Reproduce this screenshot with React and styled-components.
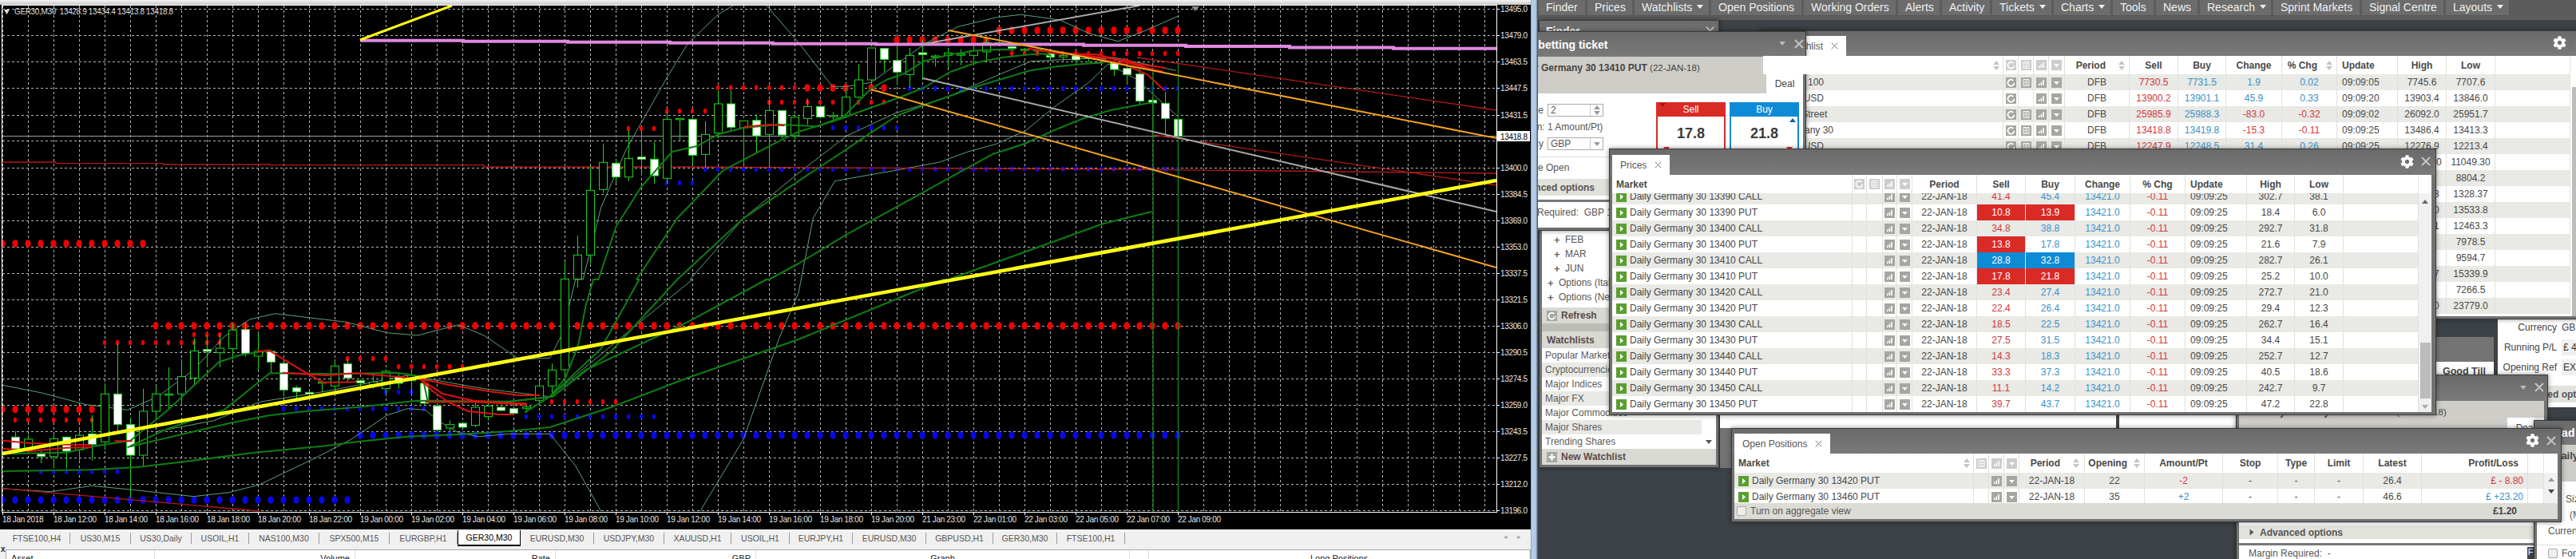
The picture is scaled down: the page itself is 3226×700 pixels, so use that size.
import React from 'react';
import styled, { createGlobalStyle } from 'styled-components';
import { FaCog } from 'react-icons/fa';

const Global = createGlobalStyle`
  html, body { margin: 0; padding: 0; background: #3c4246; }
  #root { width: 3226px; height: 700px; overflow: hidden; }
  * { box-sizing: border-box; }
`;

/* ---------- chart data, written in px of the plot ---------- */
const z1 = (x, y) => [x / 1.568, y / 3];
const z2 = (x, y) => [x / 1.568, 350 + y / 3];
const z3 = (x, y) => [1000 + x / 1.65, y / 3];
const z4 = (x, y) => [1000 + x / 1.65, 350 + y / 3];
const z10 = (x, y) => [1090 + x / 3, 30 + y / 3];
const pts = (fn, list) => list.map(([x, y]) => fn(x, y));
const str = (list) => list.map(([x, y]) => `${x.toFixed(1)},${y.toFixed(1)}`).join(' ');

const snap = (x) => 1475 - 16 * Math.round((1475 - x) / 16);

const candleSets = [
  [z2, [[30,570,592,636,650,1],[55,585,600,640,655,0],[80,640,655,665,690,1],[105,580,598,665,710,0],[130,590,592,645,710,1],[155,560,585,640,680,0],[180,510,580,620,680,1],[205,390,430,610,640,0],[231,240,430,545,570,1],[256,520,545,660,820,1],[281,410,495,660,700,0],[306,400,430,495,530,0],[331,330,430,434,490,0],[356,300,365,430,470,0],[381,220,268,370,400,0],[406,210,263,270,330,1],[431,205,258,275,330,0],[457,165,190,260,300,0],[482,165,188,278,290,1],[507,200,270,288,340,0],[532,265,270,310,350,1],[557,310,315,415,440,1],[582,400,407,422,450,1],[607,420,424,430,440,1],[632,380,385,388,420,0],[657,300,325,400,420,0],[682,300,317,370,385,1],[707,375,380,388,400,1],[732,360,385,395,410,0],[757,340,345,410,430,0],[782,350,365,390,410,1],[807,345,360,380,430,0],[832,375,390,465,470,1],[858,470,475,565,570,1],[883,530,545,558,575,0],[908,535,540,555,560,1],[933,460,480,548,555,0],[958,450,475,515,530,0],[983,470,480,492,495,1],[1008,475,485,503,510,1],[1033,470,478,484,500,0],[1058,385,400,455,470,0],[1083,315,340,400,440,0]]],
  [z1, [[1109,985,1048,1389,1440,0],[1134,885,958,1048,1080,0],[1159,625,715,958,990,0],[1184,540,610,712,725,0],[1209,600,613,665,690,1],[1234,490,595,665,680,0],[1259,490,590,598,660,1],[1284,535,598,660,690,1],[1309,420,448,670,690,0],[1334,445,445,449,530,0],[1359,448,448,583,620,1],[1384,455,505,580,630,0],[1410,340,390,500,520,0],[1435,340,390,478,490,1],[1460,455,454,480,620,0],[1485,430,452,510,575,1],[1511,375,415,505,630,0],[1536,415,415,507,520,1],[1560,430,440,510,530,0]]],
  [z3, [[18,370,400,445,470,0],[45,395,400,440,445,1],[71,420,434,438,460,0],[98,330,365,435,440,0],[124,240,300,365,370,0],[150,180,180,300,320,0]]],
  [z10, [[52,92,92,133,180,1],[100,85,137,181,225,1],[148,90,118,190,240,0],[196,60,108,115,205,1],[244,115,120,124,160,0],[292,90,109,118,165,0],[340,95,113,117,155,0],[388,80,100,118,155,0],[436,50,70,105,140,0],[484,20,70,72,75,0],[532,70,85,92,100,1],[580,90,95,97,105,0],[628,90,97,100,110,0],[676,105,113,125,135,1],[724,110,118,124,140,0],[772,110,120,135,140,1],[820,120,125,130,145,0],[868,125,130,135,145,0],[916,130,147,171,195,1],[964,150,167,190,225,1],[1012,165,188,290,300,1],[1060,280,286,297,420,1],[1108,255,298,355,415,1],[1156,340,358,422,430,1]]],
];

const candles = candleSets.flatMap(([fn, list]) =>
  list.map(([x, wt, bt, bb, wb, white]) => ({
    x: snap(fn(x, 0)[0]),
    wt: fn(0, wt)[1],
    bt: fn(0, bt)[1],
    bb: fn(0, bb)[1],
    wb: fn(0, wb)[1],
    white: !!white,
  }))
);

const dotRows = [
  [3, 178, 305, 'r', 1], [194, 1475, 408, 'r', 1], [450, 1475, 545, 'b', 1], [3, 434, 626, 'b', 1],
  [899, 1000, 109.7, 'r', 0], [1011, 1107, 110, 'r', 1], [963, 1000, 128, 'r', 0], [1011, 1107, 128, 'r', 0],
  [835, 899, 139, 'r', 0], [787, 819, 161, 'r', 0], [1251, 1475, 38, 'r', 1], [1123, 1236, 50, 'r', 1], [1267, 1475, 67, 'r', 0],
  [131, 275, 429, 'r', 0], [242, 275, 419, 'r', 0], [435, 483, 449, 'r', 0], [499, 579, 459, 'r', 0],
  [3, 115, 512.7, 'r', 1], [19, 115, 526, 'r', 0], [691, 772, 503, 'r', 0],
  [355, 530, 511.7, 'b', 0], [483, 531, 491, 'b', 0], [659, 819, 521.7, 'b', 0], [51, 147, 590.7, 'b', 0],
  [835, 867, 229, 'b', 0], [883, 1000, 212, 'b', 0], [1011, 1475, 211.7, 'b', 0], [1139, 1475, 111, 'b', 0], [1043, 1123, 160, 'b', 0],
];

const dots = dotRows.flatMap(([a, b, y, c, big]) => {
  const out = [];
  for (let x = 1475; x >= a - 2; x -= 16) if (x <= b + 2) out.push({ x, y, c, big });
  return out;
});

const thin = [
  [...pts(z2, [[5,397],[80,425],[170,470],[250,490],[310,440],[380,340],[440,215],[490,150],[540,128],[680,160],[760,200],[820,210],[900,170],[950,210],[1020,300],[1080,295],[1105,200],[1130,0]]), ...pts(z1, [[1145,1050],[1180,780],[1230,560],[1310,290],[1350,165],[1410,55],[1440,20]])],
  [...pts(z1, [[1505,20],[1568,160]]), ...pts(z3, [[70,325],[100,325],[150,310],[265,160],[330,100],[410,65],[460,55],[540,75],[600,125],[660,155],[710,120],[785,60]])],
  [...pts(z2, [[0,785],[100,797],[180,775],[260,790],[380,815],[450,800],[510,770],[620,670],[690,600],[760,510],[800,485],[835,490],[860,530],[900,575],[940,590],[1000,580],[1080,580],[1130,700],[1180,870]])],
  [...pts(z2, [[1375,870],[1460,600],[1530,220],[1568,50]]), ...pts(z3, [[30,820],[75,680],[200,640],[290,610],[350,570],[410,540],[470,490],[530,400],[600,310],[640,240],[700,300],[785,440]])],
  [...pts(z2, [[310,570],[420,530],[510,460],[640,420],[800,360],[950,410],[1080,440],[1250,170],[1360,0]]), ...pts(z1, [[1355,1050],[1460,820],[1568,650]]), ...pts(z3, [[100,510],[200,425],[300,370],[415,280],[480,230],[650,215],[780,265]])],
];

const greens = [
  pts(z2, [[5,655],[130,650],[190,625],[256,605],[330,490],[380,400],[430,310],[470,285],[530,265]]),
  [...pts(z2, [[1030,500],[1080,440],[1110,370],[1135,250],[1150,100],[1165,0]]), ...pts(z1, [[1175,1050],[1210,850],[1260,700],[1320,570],[1370,548],[1410,505],[1460,480],[1530,468]]), ...pts(z3, [[40,475],[95,435]]), ...pts(z10, [[0,245],[60,210],[130,185],[200,140],[300,115],[400,100],[500,95],[540,98]])],
  [...pts(z2, [[256,625],[330,560],[440,490],[530,352],[650,355],[780,350],[830,365],[840,460],[1000,460],[1080,440],[1180,260],[1255,0]]), ...pts(z1, [[1250,1050],[1330,820],[1420,640],[1530,530],[1568,495]]), ...pts(z3, [[90,445]]), ...pts(z10, [[0,315],[100,280],[200,240],[300,180],[400,145],[500,125],[600,115],[650,112],[680,120]])],
  [...pts(z2, [[250,630],[450,540],[530,510],[600,495],[700,480],[820,455],[1000,458],[1085,440],[1200,270],[1330,0]]), ...pts(z1, [[1330,1050],[1460,820],[1568,680]]), ...pts(z3, [[100,560]]), ...pts(z10, [[0,410],[100,345],[200,305],[300,270],[400,235],[500,205],[600,175],[700,160],[800,150],[880,145]])],
  [...pts(z2, [[1085,440],[1150,340],[1350,160],[1505,0]]), ...pts(z1, [[1510,1050]]), ...pts(z3, [[0,990],[100,880],[300,680],[400,580]]), ...pts(z10, [[580,450],[700,395],[800,355],[900,325],[1000,305],[1060,295]])],
  [...pts(z2, [[0,720],[180,715],[270,705],[360,685],[500,650],[640,625],[700,610],[800,590],[900,582],[1000,570],[1080,555],[1200,480],[1350,370],[1568,225]]), ...pts(z4, [[300,0]]), ...pts(z3, [[310,1050],[630,840],[730,795]])],
];

const reds = [
  pts(z2, [[5,605],[60,615],[130,620],[180,622]]),
  pts(z2, [[5,635],[60,645],[130,632],[180,630]]),
  pts(z2, [[225,607],[260,607]]),
  pts(z2, [[230,575],[256,570]]),
  pts(z2, [[505,270],[530,268],[600,350],[635,387],[700,385]]),
  pts(z2, [[555,350],[640,360],[700,352],[780,365],[830,375],[880,395],[960,420],[1020,435],[1060,435]]),
  pts(z2, [[825,375],[850,420],[880,460],[920,495],[980,507],[1010,507]]),
  pts(z2, [[835,460],[930,460],[1035,470]]),
  pts(z2, [[830,380],[870,430],[930,455],[1000,465],[1033,465]]),
  pts(z1, [[1460,477],[1510,468],[1540,472]]),
  pts(z10, [[590,92],[700,110],[850,115],[1000,150],[1110,165]]),
  pts(z10, [[700,105],[900,130],[1100,180]]),
  pts(z10, [[800,120],[950,150],[1040,190],[1105,250]]),
  pts(z10, [[950,130],[1050,170]]),
];

const darkReds = [
  [[3,203],[70,203],[70,204.7],[204,204.7],[204,206],[338,206],[338,206.7],[606,206.7],[606,209],[872,209],[1406,212],[1874,217]],
  [[1424,72],[1874,138]],
  [[1445,169],[1874,232]],
  [[3,611.7],[325,640]],
];

const pinkSteps = [[451,50.7],[580,51.7],[711,52.7],[839,53.7],[968,54.7],[1097,55.5],[1357,56.7],[1485,58],[1615,59.5],[1745,60.7],[1874,60.7]];
const pinkPath = pinkSteps.slice(0, -1).flatMap(([x, y], i) => [[x, y], [pinkSteps[i + 1][0], y]]);

const priceAxis = [
  ['13495.0',10.7],['13479.0',43.5],['13463.5',76.7],['13447.5',109.5],['13431.5',143.5],['13416.0',176],['13400.0',209.5],['13384.5',242.5],['13369.0',275.5],['13353.0',309],['13337.5',342],['13321.5',374.5],['13306.0',407.5],['13290.5',440.5],['13274.5',473.5],['13259.0',506.5],['13243.5',539.5],['13227.5',572.5],['13212.0',605.5],['13196.0',638.5],
];
const timeAxis = ['18 Jan 2018','18 Jan 12:00','18 Jan 14:00','18 Jan 16:00','18 Jan 18:00','18 Jan 20:00','18 Jan 22:00','19 Jan 00:00','19 Jan 02:00','19 Jan 04:00','19 Jan 06:00','19 Jan 08:00','19 Jan 10:00','19 Jan 12:00','19 Jan 14:00','19 Jan 16:00','19 Jan 18:00','19 Jan 20:00','21 Jan 23:00','22 Jan 01:00','22 Jan 03:00','22 Jan 05:00','22 Jan 07:00','22 Jan 09:00'];

const Chart = () => {
  const vLines = [];
  for (let x = 3; x <= 1874; x += 32) vLines.push(x);
  return (
    <ChartSvg width="1917" height="657" viewBox="0 6 1917 657">
      <defs>
        <clipPath id="plot"><rect x="3" y="7" width="1871" height="634" /></clipPath>
      </defs>
      {vLines.map((x) => <line key={x} x1={x + 0.5} x2={x + 0.5} y1="7" y2="641" stroke="#b4b4b4" strokeDasharray="3 3" />)}
      {priceAxis.map(([t, y]) => <line key={t} x1="3" x2="1874" y1={Math.round(y) + 0.5} y2={Math.round(y) + 0.5} stroke="#b4b4b4" strokeDasharray="3 3" />)}
      <g clipPath="url(#plot)">
        <line x1="3" x2="1874" y1="170.5" y2="170.5" stroke="#9a9a9a" />
        {dots.map((d, i) => (
          <ellipse key={i} cx={d.x} cy={d.y} rx={d.big ? 3.6 : 2.2} ry={d.big ? 4.8 : 3.2} fill={d.c === 'r' ? '#f00000' : '#0808e6'} />
        ))}
        {thin.map((l, i) => <polyline key={i} points={str(l)} fill="none" stroke="#5f9f78" strokeWidth="1" />)}
        {darkReds.map((l, i) => <polyline key={i} points={str(l)} fill="none" stroke="#b01a1a" strokeWidth="1.3" />)}
        {candles.map((c, i) => (
          <g key={i}>
            <line x1={c.x + 0.5} x2={c.x + 0.5} y1={c.wt} y2={c.wb} stroke="#20d420" />
            <rect x={c.x - 4.5} y={c.bt} width="10" height={Math.max(c.bb - c.bt, 1.5)} fill={c.white ? '#fff' : '#000'} stroke="#20d420" />
          </g>
        ))}
        {greens.map((l, i) => <polyline key={i} points={str(l)} fill="none" stroke="#0e7d14" strokeWidth="2" strokeLinejoin="round" />)}
        {reds.map((l, i) => <polyline key={i} points={str(l)} fill="none" stroke="#dc1010" strokeWidth="2" strokeLinejoin="round" />)}
        <line x1="1444" x2="1444" y1="88" y2="641" stroke="#0e7d14" strokeWidth="1.5" />
        <line x1="1475.5" x2="1475.5" y1="80" y2="641" stroke="#0e7d14" strokeWidth="1.5" />
        <polyline points={str(pinkPath)} fill="none" stroke="#e088e0" strokeWidth="4" />
        <line x1="1157" y1="55" x2="1427" y2="7" stroke="#a8a8a8" strokeWidth="2" />
        <line x1="1156" y1="98" x2="1874" y2="265" stroke="#a8a8a8" strokeWidth="2" />
        <line x1="1188" y1="38" x2="1874" y2="173" stroke="#f0a020" strokeWidth="2" />
        <line x1="1091" y1="112" x2="1874" y2="335" stroke="#f0a020" strokeWidth="2" />
        <line x1="451" y1="50" x2="566" y2="7" stroke="#ffff14" strokeWidth="3" />
        <line x1="3" y1="568" x2="1874" y2="226" stroke="#ffff14" strokeWidth="4.5" />
      </g>
      <rect x="2.5" y="6.5" width="1872" height="635" fill="none" stroke="#fff" />
      <path d="M1492 8 l10 0 l-5 6 z" fill="#888" />
      <path d="M5 12 l7 0 l-3.5 6 z" fill="#ddd" />
      <ChartText x="18" y="18" fill="#d8d8d8">GER30,M30  13428.9 13434.4 13413.8 13418.8</ChartText>
      {priceAxis.map(([t, y]) => (
        <g key={t}>
          <line x1="1875" x2="1878" y1={Math.round(y) + 0.5} y2={Math.round(y) + 0.5} stroke="#fff" />
          {t !== '13416.0' && <ChartText x="1879" y={y + 4} fill="#e6e6e6">{t}</ChartText>}
        </g>
      ))}
      <rect x="1875" y="164" width="41" height="13" fill="#fff" />
      <ChartText x="1879" y="174.5" fill="#000">13418.8</ChartText>
      {timeAxis.map((t, k) => (
        <g key={t}>
          <line x1={3.5 + 64 * k} x2={3.5 + 64 * k} y1="641" y2="645" stroke="#fff" />
          <ChartText x={3 + 64 * k} y="654" fill="#e6e6e6">{t}</ChartText>
        </g>
      ))}
    </ChartSvg>
  );
};

/* ---------- left: terminal ---------- */
const Page = styled.div`
  display: flex;
  width: 3226px;
  height: 700px;
  overflow: hidden;
  font-family: "Liberation Sans", Arial, sans-serif;
`;
const Terminal = styled.div`
  width: 1917px;
  height: 700px;
  flex: none;
  display: flex;
  flex-direction: column;
  background: #f0f0f0;
  overflow: hidden;
`;
const TopEdge = styled.div`
  height: 6px;
  flex: none;
  background: linear-gradient(#f4f4f4, #c8c8c8);
`;
const ChartSvg = styled.svg`
  display: block;
  flex: none;
  background: #000;
`;
const ChartText = styled.text`
  font: 10px "Liberation Sans", Arial, sans-serif;
  letter-spacing: -0.35px;
  white-space: pre;
`;
const TabBar = styled.div`
  height: 25px;
  flex: none;
  display: flex;
  align-items: flex-start;
  padding: 3px 0 0 5px;
  background: #f0f0f0;
  border-top: 1px solid #fff;
`;
const ChartTab = styled.div`
  width: ${(p) => p.$w}px;
  height: ${(p) => (p.$active ? 20 : 14)}px;
  margin-top: ${(p) => (p.$active ? -3 : 0)}px;
  flex: none;
  display: flex;
  align-items: center;
  justify-content: center;
  font-size: 10.5px;
  color: ${(p) => (p.$active ? '#000' : '#555')};
  background: ${(p) => (p.$active ? '#fff' : 'transparent')};
  border-right: 1px solid ${(p) => (p.$active ? '#000' : '#9a9a9a')};
  border-left: ${(p) => (p.$active ? '1px solid #000' : '0')};
  border-bottom: ${(p) => (p.$active ? '2px solid #000' : '0')};
`;
const TabArrows = styled.div`
  margin-left: auto;
  width: 34px;
  display: flex;
  justify-content: space-between;
  padding-right: 12px;
  font-size: 9px;
  color: #aaa;
`;
const TerminalFoot = styled.div`
  flex: none;
  display: flex;
`;
const CloseMark = styled.span`
  width: 7px;
  margin-top: -6px;
  font-size: 10px;
  font-weight: bold;
  padding-left: 1px;
  color: #222;
  flex: none;
`;
const TerminalTable = styled.div`
  flex: 1;
  height: 30px;
  border: 1px solid #aaa;
  border-bottom: 0;
  background: #fff;
  display: grid;
  grid-template-columns: 186px 251px 251px 251px 468px 24px 1fr;
  font-size: 11px;
  color: #222;
`;
const TH = styled.div`
  height: 18px;
  padding: 4px 6px;
  text-align: ${(p) => p.$al || 'center'};
  border-right: 1px solid #e0e0e0;
`;
const Strip = styled.div`
  width: 9px;
  flex: none;
  background: linear-gradient(90deg, #8ea6c0 0 1px, #b9d1ea 1px, #a8c4e2 7px, #51606e 8px);
`;

/* ---------- right: desktop of windows ---------- */
const Desktop = styled.div`
  position: relative;
  flex: 1;
  height: 700px;
  background: #3c4246;
  overflow: hidden;
  font-size: 12px;
  color: #444;
`;
const Nav = styled.div`
  height: 25px;
  display: flex;
  gap: 3px;
  padding-left: 1px;
  background: #5c5c5c;
`;
const NavBtn = styled.div`
  width: ${(p) => p.$w}px;
  height: 20px;
  flex: none;
  display: flex;
  align-items: center;
  gap: 6px;
  padding: 0 0 2px 9px;
  background: #6c6c6c;
  border-bottom: 1px solid #585858;
  color: #f0f0f0;
  font-size: 14px;
`;
const Caret = styled.span`
  width: 0;
  height: 0;
  flex: none;
  border-left: 4px solid transparent;
  border-right: 4px solid transparent;
  border-top: 5px solid ${(p) => p.$c || '#f0f0f0'};
  transform: ${(p) => (p.$side ? 'rotate(-90deg)' : 'none')};
`;
const Win = styled.div`
  position: absolute;
  left: ${(p) => p.$x}px;
  top: ${(p) => p.$y}px;
  width: ${(p) => p.$w}px;
  height: ${(p) => p.$h}px;
  background: #717171;
  border: 1px solid #3a3a3a;
  box-shadow: 0 0 6px rgba(0, 0, 0, 0.45);
  display: flex;
  flex-direction: column;
  overflow: hidden;
`;
const TitleBar = styled.div`
  height: ${(p) => p.$h || 32}px;
  flex: none;
  display: flex;
  align-items: flex-end;
  gap: 6px;
  padding: 0 ${(p) => p.$pr ?? 6}px 0 3px;
  background: linear-gradient(#6a6a6a, #7a7a7a);
  color: #fff;
`;
const WinTab = styled.div`
  height: 25px;
  padding: 0 10px;
  flex: none;
  display: flex;
  align-items: center;
  gap: 10px;
  background: #fff;
  color: #555;
  font-size: 12px;
  width: ${(p) => (p.$w ? `${p.$w}px` : 'auto')};
  justify-content: ${(p) => (p.$end ? 'flex-end' : 'flex-start')};
`;
const TitleTools = styled.div`
  margin-left: auto;
  height: 100%;
  display: flex;
  align-items: center;
  gap: ${(p) => p.$gap ?? 9}px;
  padding-bottom: 2px;
`;
const Cross = ({ size = 11, color = '#c4c4c4', w = 2 }) => (
  <svg width={size} height={size} viewBox="0 0 12 12">
    <path d="M1 1 L11 11 M11 1 L1 11" stroke={color} strokeWidth={w} fill="none" />
  </svg>
);
const Sheet = styled.div`
  flex: 1;
  min-height: 0;
  margin: 0 ${(p) => p.$r ?? 3}px 3px 3px;
  background: #fff;
  display: flex;
  flex-direction: column;
  overflow: hidden;
`;
const HeadRow = styled.div`
  display: grid;
  grid-template-columns: ${(p) => p.$cols};
  height: ${(p) => p.$h || 23}px;
  flex: none;
  background: #fff;
  position: relative;
  z-index: 1;
  font-weight: bold;
  font-size: 12px;
  color: #3e3e3e;
`;
const Row = styled.div`
  display: grid;
  grid-template-columns: ${(p) => p.$cols};
  height: 20px;
  flex: none;
  margin-top: ${(p) => (p.$clip ? -6 : 0)}px;
  background: ${(p) => (p.$alt ? '#e9e9e5' : '#fff')};
`;
const Cell = styled.div`
  display: flex;
  align-items: center;
  justify-content: ${(p) => (p.$al === 'left' ? 'flex-start' : p.$al === 'right' ? 'flex-end' : 'center')};
  padding: ${(p) => p.$pad || '0'};
  gap: ${(p) => p.$gap ?? 6}px;
  white-space: nowrap;
  overflow: hidden;
  border-right: 1px solid #e0e0dc;
  color: ${(p) => (p.$hl ? '#fff' : p.$c === 'sell' ? '#cf3a3f' : p.$c === 'buy' ? '#3a92c8' : '#484848')};
  background: ${(p) => (p.$hl === 'sell' ? '#da2a26' : p.$hl === 'buy' ? '#0e8bd6' : 'transparent')};
`;
const Grow = styled.span`
  flex: 1;
`;
const RowsView = styled.div`
  flex: none;
  width: ${(p) => (p.$w ? `${p.$w}px` : 'auto')};
  flex-grow: ${(p) => (p.$w ? 0 : 1)};
  min-width: 0;
  overflow: hidden;
  display: flex;
  flex-direction: column;
`;
const RowsFrame = styled.div`
  flex: 1;
  min-height: 0;
  display: flex;
`;
const SmallArrow = styled.span`
  width: 0;
  height: 0;
  flex: none;
  border-left: 4px solid transparent;
  border-right: 4px solid transparent;
  ${(p) => (p.$up ? `border-bottom: 5px solid ${p.$c || '#8a8a8a'};` : `border-top: 5px solid ${p.$c || '#8a8a8a'};`)}
`;
const Scroll = styled.div`
  width: ${(p) => p.$w || 16}px;
  flex: none;
  display: flex;
  flex-direction: column;
  align-items: center;
  gap: ${(p) => p.$gap || 0}px;
  padding: ${(p) => p.$pad || '8px 0 4px'};
  background: #f0f0f0;
`;
const Thumb = styled.div`
  width: 13px;
  height: 70px;
  margin-top: auto;
  margin-bottom: 8px;
  background: #bcbcbc;
`;
const WatchThumb = styled.div`
  width: 13px;
  height: 300px;
  margin: 16px 0 0 2px;
  flex: none;
  background: #bcbcbc;
`;
const SortPair = styled.span`
  display: inline-flex;
  flex-direction: column;
  gap: 2px;
  flex: none;
`;
const Sort = () => (
  <SortPair>
    <SmallArrow $up $c="#c4c4c4" />
    <SmallArrow $c="#c4c4c4" />
  </SortPair>
);

/* small square icons */
const IconBox = styled.span`
  width: 13px;
  height: 13px;
  flex: none;
  display: block;
  opacity: ${(p) => (p.$faint ? 0.55 : 1)};
`;
const Glyph = ({ kind, faint }) => (
  <IconBox $faint={faint}>
    <svg width="13" height="13" viewBox="0 0 13 13">
      <rect width="13" height="13" fill={kind === 'go' ? '#5a9f30' : '#a6a6a2'} />
      {kind === 'go' && <path d="M5 3 L9 6.5 L5 10 Z" fill="#fff" />}
      {kind === 'arrow' && <path d="M3 5 L10 5 L6.5 9 Z" fill="#fff" />}
      {kind === 'chart' && <path d="M3 10 h1.6 v-2.5 h-1.6 z M5.6 10 h1.6 v-4.5 h-1.6 z M8.2 10 h1.6 v-7 h-1.6 z" fill="#fff" />}
      {kind === 'doc' && <path d="M3 2.5 h7 v8 h-7 z M4.5 4.5 h4 M4.5 6.5 h4 M4.5 8.5 h4" stroke="#fff" fill="none" />}
      {kind === 'ref' && <path d="M9.3 3.8 A4 4 0 1 0 10.4 7" stroke="#fff" strokeWidth="1.8" fill="none" />}
      {kind === 'plus' && <path d="M6.5 2.5 v8 M2.5 6.5 h8" stroke="#fff" strokeWidth="2.4" fill="none" />}
    </svg>
  </IconBox>
);

/* ---------- data ---------- */
const navItems = [['Finder', 58], ['Prices', 56], ['Watchlists', 93, 1], ['Open Positions', 113], ['Working Orders', 115], ['Alerts', 52], ['Activity', 60], ['Tickets', 74, 1], ['Charts', 71, 1], ['Tools', 51], ['News', 52], ['Research', 89, 1], ['Sprint Markets', 108], ['Signal Centre', 102], ['Layouts', 79, 1]];
const tabs = [['FTSE100,H4',83],['US30,M15',76],['US30,Daily',76],['USOIL,H1',72],['NAS100,M30',88],['SPX500,M15',88],['EURGBP,H1',85],['GER30,M30',79,1],['EURUSD,M30',92],['USDJPY,M30',88],['XAUUSD,H1',84],['USOIL,H1',73],['EURJPY,H1',79],['EURUSD,M30',92],['GBPUSD,H1',84],['GER30,M30',80],['FTSE100,H1',85]];

const wlCols = '301px 19px 19px 19px 20px 81px 61px 60px 70px 69px 76px 61px 61px 94px';
const wlRows = [
  ['FTSE 100','7730.5','7731.5','1.9','0.02','09:09:05','7745.6','7707.6',1],
  ['GBP/USD','13900.2','13901.1','45.9','0.33','09:09:20','13903.4','13846.0',0],
  ['Wall Street','25985.9','25988.3','-83.0','-0.32','09:09:02','26092.0','25951.7',1],
  ['Germany 30','13418.8','13419.8','-15.3','-0.11','09:09:25','13486.4','13413.3',1],
  ['EUR/USD','12247.9','12248.5','31.4','0.26','09:09:25','12276.9','12213.4',1],
  ['','','','','','','11090.50','11049.30',0],
  ['','','','','','','8845.7','8804.2',0],
  ['','','','','','','1335.03','1328.37',0],
  ['','','','','','','13560.0','13533.8',0],
  ['','','','','','','12490.1','12463.3',0],
  ['','','','','','','8005.3','7978.5',0],
  ['','','','','','','9620.7','9594.7',0],
  ['','','','','','','15390.7','15339.9',0],
  ['','','','','','','7290.5','7266.5',0],
  ['','','','','','','23800.0','23779.0',0],
];

const prCols = '301px 18px 20px 18px 19px 81px 61px 62px 69px 69px 77px 60px 61px 94px';
const prRows = [
  ['13390 CALL','41.4','45.4','302.7','38.1'],
  ['13390 PUT','10.8','13.9','18.4','6.0','sell','sell'],
  ['13400 CALL','34.8','38.8','292.7','31.8'],
  ['13400 PUT','13.8','17.8','21.6','7.9','sell'],
  ['13410 CALL','28.8','32.8','282.7','26.1','buy','buy'],
  ['13410 PUT','17.8','21.8','25.2','10.0','sell','sell'],
  ['13420 CALL','23.4','27.4','272.7','21.0'],
  ['13420 PUT','22.4','26.4','29.4','12.3'],
  ['13430 CALL','18.5','22.5','262.7','16.4'],
  ['13430 PUT','27.5','31.5','34.4','15.1'],
  ['13440 CALL','14.3','18.3','252.7','12.7'],
  ['13440 PUT','33.3','37.3','40.5','18.6'],
  ['13450 CALL','11.1','14.2','242.7','9.7'],
  ['13450 PUT','39.7','43.7','47.2','22.8'],
];

const opCols = '300px 19px 19px 19px 82px 75px 98px 69px 46px 61px 73px 133px 20px';
const opRows = [
  ['13420 PUT','22','-2','sell','26.4','£ - 8.80'],
  ['13460 PUT','35','+2','buy','46.6','£ +23.20'],
];

const sign = (s) => (s.startsWith('-') ? 'sell' : 'buy');

/* finder */
const TreeArea = styled.div`
  flex: 1;
  background: #fff;
  display: flex;
  flex-direction: column;
  justify-content: flex-end;
  padding-bottom: 4px;
  color: #555;
`;
const TreeRow = styled.div`
  height: 18px;
  display: flex;
  align-items: center;
  gap: 6px;
  white-space: nowrap;
  padding-left: ${(p) => p.$i}px;
`;
const Plus = styled.span`
  font-weight: bold;
  font-size: 13px;
  color: #666;
  width: 8px;
  flex: none;
`;
const GreyBar = styled.div`
  height: ${(p) => p.$h}px;
  flex: none;
  background: ${(p) => p.$bg || '#d9d9d3'};
  display: flex;
  align-items: center;
  gap: 5px;
  padding: 0 6px;
  color: #5c4a4a;
  font-weight: bold;
  font-size: 12px;
`;
const ListRow = styled.div`
  height: 18px;
  width: 200px;
  flex: none;
  display: flex;
  align-items: center;
  padding-left: 4px;
  background: ${(p) => (p.$alt ? '#e9e9e5' : '#fff')};
  color: #5a5a5a;
  white-space: nowrap;
`;
const ListWrap = styled.div`
  position: relative;
  background: #fff;
  flex: none;
`;
const ListArrow = styled.span`
  position: absolute;
  right: 5px;
  bottom: 6px;
  display: flex;
`;

/* ticket */
const TicketTitle = styled.div`
  flex: 1;
  align-self: center;
  padding-left: ${(p) => p.$pad ?? 9}px;
  font-weight: bold;
  font-size: 14px;
  white-space: nowrap;
`;
const DealHead = styled.div`
  height: 46px;
  flex: none;
  background: #cfcdc8;
  display: flex;
  flex-direction: column;
  justify-content: space-between;
  color: #444;
`;
const DealName = styled.div`
  padding: 7px 0 0 ${(p) => p.$pad}px;
  font-weight: bold;
  font-size: 12px;
  white-space: nowrap;
  span { font-weight: normal; font-size: 11.5px; }
`;
const DealTab = styled.div`
  align-self: flex-end;
  width: 46px;
  height: 25px;
  background: #fff;
  display: flex;
  align-items: center;
  justify-content: center;
  font-size: 12px;
`;
const TicketBody = styled.div`
  flex: 1;
  display: flex;
  gap: 5px;
  padding-top: 11px;
  color: #555;
`;
const Form = styled.div`
  width: ${(p) => p.$w}px;
  flex: none;
  display: flex;
  flex-direction: column;
`;
const FormRow = styled.div`
  height: ${(p) => p.$h}px;
  flex: none;
  display: flex;
  align-items: center;
  gap: 5px;
  white-space: nowrap;
  padding-left: ${(p) => p.$pl || 0}px;
`;
const FormLabel = styled.span`
  width: 67px;
  text-align: right;
  flex: none;
`;
const Input = styled.span`
  width: 70px;
  height: 16px;
  flex: none;
  border: 1px solid #aaa;
  display: flex;
  align-items: center;
  justify-content: space-between;
  padding-left: 3px;
  background: #fff;
`;
const Spin = styled.span`
  width: 16px;
  height: 100%;
  border-left: 1px solid #ccc;
  display: flex;
  flex-direction: column;
  align-items: center;
  justify-content: center;
  gap: 2px;
`;
const Divider = styled.div`
  height: 1px;
  flex: none;
  background: #ddd;
  margin-top: ${(p) => p.$t || 0}px;
`;
const BoldBar = styled.div`
  height: ${(p) => p.$h || 21}px;
  flex: none;
  background: #e2e2dc;
  display: flex;
  align-items: center;
  padding-left: ${(p) => p.$pl}px;
  font-weight: bold;
  color: #555;
  gap: 6px;
  white-space: nowrap;
  margin-top: ${(p) => p.$t || 0}px;
`;
const DarkRule = styled.div`
  height: 3px;
  flex: none;
  background: #777;
  margin: 5px 0 ${(p) => p.$b || 0}px;
`;
const PriceBox = styled.div`
  width: 87px;
  height: 90px;
  flex: none;
  border: 2px solid ${(p) => p.$c};
  border-top: 0;
  display: flex;
  flex-direction: column;
  background: #fff;
`;
const PriceHead = styled.div`
  height: 18px;
  margin: 0 -2px;
  background: ${(p) => p.$c};
  color: #fff;
  position: relative;
  display: flex;
  align-items: center;
  justify-content: center;
  font-size: 12px;
`;
const PriceNum = styled.div`
  flex: none;
  height: 28px;
  margin-top: 7px;
  display: flex;
  align-items: center;
  justify-content: center;
  font-size: 18px;
  font-weight: bold;
  color: #3a3a3a;
`;
const PriceMark = styled.span`
  position: absolute;
  top: 6px;
  ${(p) => (p.$left ? 'left: 4px;' : 'right: 4px;')}
`;
const TinyTri = styled.span`
  margin: 3px ${(p) => (p.$right ? '6px' : 'auto')} 0 ${(p) => (p.$right ? 'auto' : '7px')};
  width: 0;
  height: 0;
  border-left: 4px solid transparent;
  border-right: 4px solid transparent;
  border-top: 5px solid #d22;
`;
const Footer = styled.div`
  height: 20px;
  flex: none;
  background: #dcdcd6;
  display: grid;
  grid-template-columns: 1fr 70px;
  align-items: center;
  padding-left: 3px;
  padding-right: 31px;
  color: #555;
`;
const Check = styled.label`
  display: flex;
  align-items: center;
  gap: 5px;
`;
const Box = styled.span`
  width: 12px;
  height: 12px;
  border: 1px solid #aaa;
  border-radius: 2px;
  background: #eee;
  flex: none;
`;
const Total = styled.span`
  font-weight: bold;
  text-align: center;
  color: #444;
`;
const Blank = styled.div`
  flex: none;
  height: ${(p) => p.$h}px;
  background: ${(p) => p.$bg || '#fff'};
`;
const InfoRow = styled.div`
  height: 25px;
  flex: none;
  display: flex;
  align-items: center;
  gap: 6px;
  white-space: nowrap;
`;
const InfoLabel = styled.span`
  width: 74px;
  flex: none;
  text-align: right;
`;
const InfoValue = styled.span`
  background: #f0f0f0;
  padding: 3px 4px 3px 2px;
  color: #333;
`;
const PlainPanel = styled.div`
  position: absolute;
  left: ${(p) => p.$x}px;
  top: ${(p) => p.$y}px;
  width: ${(p) => p.$w}px;
  height: ${(p) => p.$h}px;
  background: ${(p) => p.$bg || '#fff'};
  display: flex;
  flex-direction: column;
  overflow: hidden;
`;
const GoodTill = styled.div`
  padding: 5px 0 0 8px;
  font-weight: bold;
  font-size: 12.5px;
  color: #444;
  background: #fff;
  height: 16px;
  white-space: nowrap;
`;
const ThirdHead = styled.div`
  height: 46px;
  flex: none;
  background: #cfcdc8;
  padding: 6px 0 0 21px;
  font-weight: bold;
  font-size: 13px;
  white-space: nowrap;
  color: #444;
`;
const TextLine = styled.div`
  height: 20px;
  flex: none;
  display: flex;
  align-items: center;
  gap: 5px;
  padding-left: ${(p) => p.$pl}px;
  white-space: nowrap;
  color: #555;
`;
const Spacer = styled.div`
  height: ${(p) => p.$h}px;
  flex: none;
`;
const HelpBadge = styled.span`
  margin-left: auto;
  margin-right: 13px;
  width: 8px;
  height: 16px;
  background: #444;
  color: #fff;
  font-size: 11px;
  text-align: center;
  overflow: hidden;
  flex: none;
`;

const X0 = 1926;

export default function App() {
  return (
    <>
      <Global />
      <Page>
        <Terminal>
          <TopEdge />
          <Chart />
          <TabBar>
            {tabs.map(([t, w, a], i) => <ChartTab key={i} $w={w} $active={!!a}>{t}</ChartTab>)}
            <TabArrows><span>◂</span><span>▸</span></TabArrows>
          </TabBar>
          <TerminalFoot>
            <CloseMark>x</CloseMark>
            <TerminalTable>
              <TH $al="left">Asset</TH>
              <TH $al="right">Volume</TH>
              <TH $al="right">Rate</TH>
              <TH $al="right">GBP</TH>
              <TH>Graph</TH>
              <TH />
              <TH>Long Positions</TH>
            </TerminalTable>
          </TerminalFoot>
        </Terminal>
        <Strip />
        <Desktop>
          <Nav>
            {navItems.map(([t, w, c]) => (
              <NavBtn key={t} $w={w}>{t}{c && <Caret />}</NavBtn>
            ))}
          </Nav>

          {/* Finder */}
          <Win $x={1} $y={25} $w={226} $h={561}>
            <TitleBar $h={26} $pr={5}>
              <TicketTitle $pad={5}>Finder</TicketTitle>
              <TitleTools><Cross /></TitleTools>
            </TitleBar>
            <Sheet $r={3}>
              <TreeArea>
                <TreeRow $i={15}><Plus>+</Plus>FEB</TreeRow>
                <TreeRow $i={15}><Plus>+</Plus>MAR</TreeRow>
                <TreeRow $i={15}><Plus>+</Plus>JUN</TreeRow>
                <TreeRow $i={7}><Plus>+</Plus>Options (Italy 40)</TreeRow>
                <TreeRow $i={7}><Plus>+</Plus>Options (Netherlands)</TreeRow>
              </TreeArea>
              <GreyBar $h={20}><Glyph kind="ref" />Refresh</GreyBar>
              <Blank $h={10} $bg="#bdbdb8" />
              <GreyBar $h={21}>Watchlists</GreyBar>
              <ListWrap>
                {['Popular Markets','Cryptocurrencies','Major Indices','Major FX','Major Commodities','Major Shares','Trending Shares'].map((t, i) => (
                  <ListRow key={t} $alt={i % 2 === 1}>{t}</ListRow>
                ))}
                <ListArrow><SmallArrow $c="#555" /></ListArrow>
              </ListWrap>
              <GreyBar $h={20}><Glyph kind="plus" />New Watchlist</GreyBar>
            </Sheet>
          </Win>

          {/* panels behind the windows */}
          <PlainPanel $x={2154 - X0} $y={400} $w={496} $h={186} $bg="#737373">
            <Blank $h={136} />
          </PlainPanel>
          <PlainPanel $x={2654 - X0} $y={400} $w={146} $h={186} $bg="#737373">
            <Blank $h={136} />
          </PlainPanel>

          {/* Right behind panel */}
          <PlainPanel $x={3128 - X0} $y={397} $w={98} $h={113}>
            <InfoRow>
              <InfoLabel>Currency</InfoLabel><span>GBP</span>
            </InfoRow>
            <InfoRow>
              <InfoLabel>Running P/L</InfoLabel><InfoValue>£ 45.00</InfoValue>
            </InfoRow>
            <InfoRow>
              <InfoLabel>Opening Ref</InfoLabel><InfoValue>EXAMPLE</InfoValue>
            </InfoRow>
            <Spacer $h={11} />
            <BoldBar $pl={19}>Advanced options</BoldBar>
          </PlainPanel>

          {/* Good till */}
          <PlainPanel $x={3051 - X0} $y={422} $w={72} $h={48} $bg="#747474">
            <Blank $h={31} $bg="#747474" />
            <GoodTill>Good Till</GoodTill>
          </PlainPanel>

          {/* Watchlist */}
          <Win $x={2204 - X0} $y={38} $w={1040} $h={362}>
            <TitleBar $h={31}>
              <WinTab $w={104} $end>Watchlist <Cross size={9} color="#777" w={1.3} /></WinTab>
              <TitleTools $gap={11}>
                <FaCog size={17} color="#fff" />
                <Cross size={12} />
              </TitleTools>
            </TitleBar>
            <Sheet $r={0}>
              <HeadRow $cols={wlCols}>
                <Cell $al="right" $pad="0 4px 0 0"><Sort /></Cell>
                <Cell><Glyph kind="ref" faint /></Cell>
                <Cell><Glyph kind="doc" faint /></Cell>
                <Cell><Glyph kind="chart" faint /></Cell>
                <Cell><Glyph kind="arrow" faint /></Cell>
                <Cell $al="right" $pad="0 5px 0 0" $gap={16}>Period<Sort /></Cell>
                <Cell>Sell</Cell><Cell>Buy</Cell><Cell>Change</Cell>
                <Cell $al="right" $pad="0 5px 0 0" $gap={11}>% Chg<Sort /></Cell>
                <Cell $al="left" $pad="0 0 0 6px">Update</Cell>
                <Cell>High</Cell><Cell>Low</Cell><Cell />
              </HeadRow>
              <RowsFrame>
                <RowsView $w={1011}>
                  {wlRows.map((r, i) => (
                    <Row key={i} $cols={wlCols} $alt={i % 2 === 0}>
                      <Cell $al="left" $pad="0 0 0 22px">{r[0]}</Cell>
                      <Cell>{r[0] ? <Glyph kind="ref" /> : null}</Cell>
                      <Cell>{r[8] ? <Glyph kind="doc" /> : null}</Cell>
                      <Cell>{r[0] ? <Glyph kind="chart" /> : null}</Cell>
                      <Cell>{r[0] ? <Glyph kind="arrow" /> : null}</Cell>
                      <Cell>{r[0] ? 'DFB' : ''}</Cell>
                      <Cell $c="sell">{r[1]}</Cell>
                      <Cell $c="buy">{r[2]}</Cell>
                      <Cell $c={r[3] ? sign(r[3]) : undefined}>{r[3]}</Cell>
                      <Cell $c={r[4] ? sign(r[4]) : undefined}>{r[4]}</Cell>
                      <Cell $al="left" $pad="0 0 0 6px">{r[5]}</Cell>
                      <Cell>{r[6]}</Cell>
                      <Cell>{r[7]}</Cell>
                      <Cell />
                    </Row>
                  ))}
                </RowsView>
                <WatchThumb />
              </RowsFrame>
            </Sheet>
          </Win>

          {/* Second ticket */}
          <Win $x={2800 - X0} $y={469} $w={391} $h={260}>
            <TitleBar $pr={4}>
              <TitleTools $gap={10}>
                <Caret $c="#bbb" />
                <Cross size={12} />
              </TitleTools>
            </TitleBar>
            <Sheet $r={4}>
              <DealHead>
                <DealName $pad={29}>Daily Germany 30 13460 PUT <span>(22-JAN-18)</span></DealName>
                <DealTab>Deal</DealTab>
              </DealHead>
              <Blank $h={110} />
              <BoldBar $pl={12} $h={17}><Caret $c="#555" $side />Advanced options</BoldBar>
              <DarkRule />
              <TextLine $pl={12}>Margin Required:&nbsp; - <HelpBadge>F</HelpBadge></TextLine>
            </Sheet>
          </Win>

          {/* Third ticket */}
          <Win $x={3173 - X0} $y={526} $w={70} $h={200}>
            <TitleBar $h={30}>
              <TicketTitle $pad={0}>Spread betting ticket</TicketTitle>
            </TitleBar>
            <Sheet $r={0}>
              <ThirdHead>Daily Germany</ThirdHead>
              <Spacer $h={12} />
              <TextLine $pl={36}>Size</TextLine>
              <TextLine $pl={41}>(Min: 1)</TextLine>
              <TextLine $pl={14}>Currency</TextLine>
              <Divider $t={7} />
              <TextLine $pl={14}><Box />Force</TextLine>
            </Sheet>
          </Win>

          {/* Main ticket */}
          <Win $x={1862 - X0} $y={39} $w={400} $h={250}>
            <TitleBar $h={31} $pr={2}>
              <TicketTitle>Spread betting ticket</TicketTitle>
              <TitleTools $gap={11}>
                <Caret $c="#bbb" />
                <Cross size={12} />
              </TitleTools>
            </TitleBar>
            <Sheet $r={3}>
              <DealHead>
                <DealName $pad={32}>Daily Germany 30 13410 PUT <span>(22-JAN-18)</span></DealName>
                <DealTab>Deal</DealTab>
              </DealHead>
              <TicketBody>
                <Form $w={203}>
                  <FormRow $h={19}>
                    <FormLabel>Size</FormLabel>
                    <Input>2<Spin><SmallArrow $up $c="#999" /><SmallArrow $c="#999" /></Spin></Input>
                  </FormRow>
                  <FormRow $h={24} $pl={42}>(Min: 1 Amount/Pt)</FormRow>
                  <FormRow $h={18}>
                    <FormLabel>Currency</FormLabel>
                    <Input>GBP<Spin><SmallArrow $c="#999" /></Spin></Input>
                  </FormRow>
                  <Divider $t={7} />
                  <FormRow $h={25} $pl={36}>Force Open</FormRow>
                  <BoldBar $pl={27} $t={2}>Advanced options</BoldBar>
                  <DarkRule $b={4} />
                  <FormRow $h={18} $pl={19}>Margin Required:&nbsp; GBP 13.00</FormRow>
                </Form>
                <PriceBox $c="#da2a26">
                  <PriceHead $c="#da2a26">
                    <PriceMark $left><SmallArrow $c="#a81010" /></PriceMark>Sell
                  </PriceHead>
                  <PriceNum>17.8</PriceNum>
                  <TinyTri />
                </PriceBox>
                <PriceBox $c="#0e8bd6">
                  <PriceHead $c="#0e8bd6">
                    Buy<PriceMark><SmallArrow $up $c="#0a5fb0" /></PriceMark>
                  </PriceHead>
                  <PriceNum>21.8</PriceNum>
                  <TinyTri $right />
                </PriceBox>
              </TicketBody>
            </Sheet>
          </Win>

          {/* Prices */}
          <Win $x={2015 - X0} $y={186} $w={1036} $h={334}>
            <TitleBar>
              <WinTab>Prices <Cross size={9} color="#777" w={1.3} /></WinTab>
              <TitleTools>
                <FaCog size={17} color="#fff" />
                <Cross size={12} />
              </TitleTools>
            </TitleBar>
            <Sheet $r={5}>
              <HeadRow $cols={prCols}>
                <Cell $al="left" $pad="0 0 0 5px">Market</Cell>
                <Cell><Glyph kind="ref" faint /></Cell>
                <Cell><Glyph kind="doc" faint /></Cell>
                <Cell><Glyph kind="chart" faint /></Cell>
                <Cell><Glyph kind="arrow" faint /></Cell>
                <Cell>Period</Cell><Cell>Sell</Cell><Cell>Buy</Cell><Cell>Change</Cell><Cell>% Chg</Cell>
                <Cell $al="left" $pad="0 0 0 6px">Update</Cell>
                <Cell>High</Cell><Cell>Low</Cell><Cell />
              </HeadRow>
              <RowsFrame>
                <RowsView>
                  {prRows.map((r, i) => (
                    <Row key={i} $cols={prCols} $alt={i % 2 === 0} $clip={i === 0}>
                      <Cell $al="left" $pad="0 0 0 5px" $gap={4}><Glyph kind="go" />Daily Germany 30 {r[0]}</Cell>
                      <Cell /><Cell />
                      <Cell><Glyph kind="chart" /></Cell>
                      <Cell><Glyph kind="arrow" /></Cell>
                      <Cell>22-JAN-18</Cell>
                      <Cell $c="sell" $hl={r[5]}>{r[1]}</Cell>
                      <Cell $c="buy" $hl={r[6]}>{r[2]}</Cell>
                      <Cell $c="buy">13421.0</Cell>
                      <Cell $c="sell">-0.11</Cell>
                      <Cell $al="left" $pad="0 0 0 6px">09:09:25</Cell>
                      <Cell>{r[3]}</Cell>
                      <Cell>{r[4]}</Cell>
                      <Cell />
                    </Row>
                  ))}
                </RowsView>
                <Scroll>
                  <SmallArrow $up $c="#666" />
                  <Thumb />
                  <SmallArrow $c="#aaa" />
                </Scroll>
              </RowsFrame>
            </Sheet>
          </Win>

          {/* Open Positions */}
          <Win $x={2168 - X0} $y={536} $w={1040} $h={118}>
            <TitleBar $h={31}>
              <WinTab>Open Positions <Cross size={9} color="#777" w={1.3} /></WinTab>
              <TitleTools>
                <FaCog size={17} color="#fff" />
                <Cross size={12} />
              </TitleTools>
            </TitleBar>
            <Sheet $r={4}>
              <HeadRow $cols={opCols} $h={24}>
                <Cell $al="left" $pad="0 4px 0 5px">Market<Grow /><Sort /></Cell>
                <Cell><Glyph kind="doc" faint /></Cell>
                <Cell><Glyph kind="chart" faint /></Cell>
                <Cell><Glyph kind="arrow" faint /></Cell>
                <Cell $al="right" $pad="0 6px 0 0" $gap={16}>Period<Sort /></Cell>
                <Cell $al="right" $pad="0 5px 0 0" $gap={8}>Opening<Sort /></Cell>
                <Cell>Amount/Pt</Cell><Cell>Stop</Cell><Cell>Type</Cell><Cell>Limit</Cell><Cell>Latest</Cell>
                <Cell $al="right" $pad="0 11px 0 0">Profit/Loss</Cell><Cell />
              </HeadRow>
              <RowsFrame>
                <RowsView>
                  {opRows.map((r, i) => (
                    <Row key={i} $cols={opCols} $alt={i === 0}>
                      <Cell $al="left" $pad="0 0 0 5px" $gap={4}><Glyph kind="go" />Daily Germany 30 {r[0]}</Cell>
                      <Cell />
                      <Cell><Glyph kind="chart" /></Cell>
                      <Cell><Glyph kind="arrow" /></Cell>
                      <Cell>22-JAN-18</Cell>
                      <Cell>{r[1]}</Cell>
                      <Cell $c={r[3]}>{r[2]}</Cell>
                      <Cell>-</Cell><Cell>-</Cell><Cell>-</Cell>
                      <Cell>{r[4]}</Cell>
                      <Cell $c={r[3]} $al="right" $pad="0 5px 0 0">{r[5]}</Cell>
                      <Cell />
                    </Row>
                  ))}
                </RowsView>
                <Scroll $w={17} $gap={10} $pad="6px 0 3px">
                  <SmallArrow $up $c="#999" />
                  <SmallArrow $c="#444" />
                </Scroll>
              </RowsFrame>
              <Footer>
                <Check><Box />Turn on aggregate view</Check>
                <Total>£1.20</Total>
              </Footer>
            </Sheet>
          </Win>
        </Desktop>
      </Page>
    </>
  );
}
